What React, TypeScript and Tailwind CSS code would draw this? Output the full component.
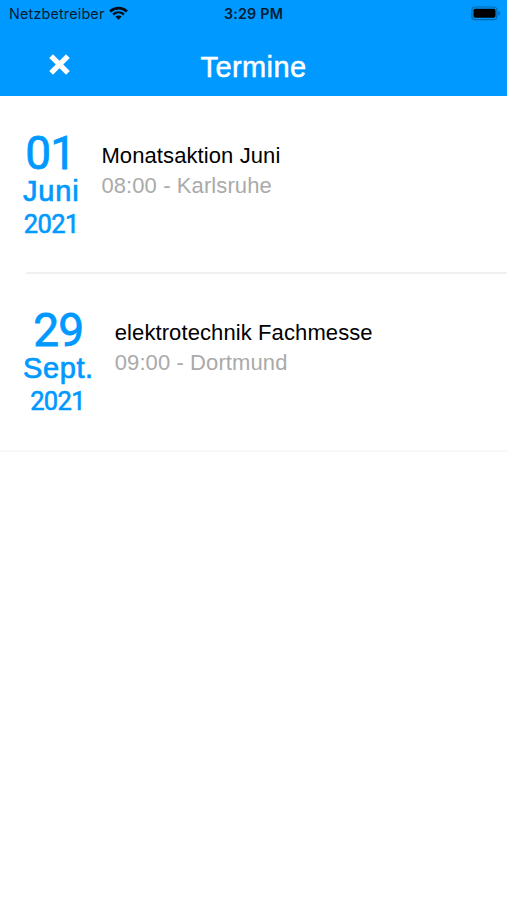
import React from "react";

const appointments = [
  {
    day: "01",
    month: "Juni",
    year: "2021",
    title: "Monatsaktion Juni",
    info: "08:00 - Karlsruhe",
  },
  {
    day: "29",
    month: "Sept.",
    year: "2021",
    title: "elektrotechnik Fachmesse",
    info: "09:00 - Dortmund",
  },
];

function StatusBar() {
  return (
    <div className="grid h-7 grid-cols-3 items-center pl-[9px] pr-1.5 font-['Inter',sans-serif] text-[#001c33]">
      <div className="flex items-center gap-[5px]">
        <span className="text-[14.3px] leading-none tracking-[0.2px]">Netzbetreiber</span>
        <svg className="mb-[2px] h-[14px] w-[19px] shrink-0" viewBox="0 0 19 14" fill="none" stroke="#000d1a">
          <path d="M1.1 5.4C5.9 0.9 13.1 0.9 17.9 5.4" strokeWidth="2.7" />
          <path d="M4.1 8.5C7.3 5.6 11.7 5.6 14.9 8.5" strokeWidth="2.4" />
          <path d="M6.3 10.6C8.1 9 10.9 9 12.7 10.6L9.5 13.8Z" fill="#000d1a" stroke="none" />
        </svg>
      </div>
      <span className="mr-[3px] text-center text-[14.3px] leading-none font-semibold tracking-[0.2px]">3:29 PM</span>
      <svg className="mb-0.5 h-[15px] w-[30px] justify-self-end" viewBox="0 0 30 15">
        <rect x="0.9" y="1" width="25" height="12.6" rx="3.4" fill="none" stroke="#0468ab" strokeWidth="1.2" />
        <rect x="2.5" y="2.8" width="22" height="9" rx="1.8" fill="#000" />
        <path d="M27.3 5.2C29.8 6 29.8 8.6 27.3 9.4Z" fill="#0468ab" />
      </svg>
    </div>
  );
}

export default function App() {
  return (
    <div className="min-h-screen w-full overflow-hidden bg-white font-['Liberation_Sans',sans-serif]">
      <header className="h-24 bg-[#0099ff]">
        <StatusBar />
        <div className="grid h-[68px] grid-cols-[120px_1fr_120px] items-center text-white">
          <button className="mb-[-5px] ml-[49px] h-[21px] w-[21px]" aria-label="Schließen">
            <svg viewBox="0 0 20 20" stroke="#fff" strokeWidth="5">
              <path d="M2 2L18 18M18 2L2 18" />
            </svg>
          </button>
          <h1 className="mt-[10px] text-center text-[29px] leading-none tracking-[0.4px] [-webkit-text-stroke:0.5px_#fff]">
            Termine
          </h1>
        </div>
      </header>
      <ul>
        {appointments.map((item) => (
          <li key={item.title} className="group">
            <div className="flex h-44 pl-[23px] group-last:-mt-px group-last:h-[177px]">
              <div className="flex flex-col items-center pt-[34px] text-[#0099ff]">
                <span className="mr-0.5 font-['Roboto',sans-serif] text-[46px] leading-[46px] tracking-[-0.8px] [-webkit-text-stroke:0.8px_#0099ff] group-last:mr-0">
                  {item.day}
                </span>
                <span className="text-[29px] leading-[31px] tracking-[0.8px] [-webkit-text-stroke:0.7px_#0099ff] group-last:tracking-[0.6px]">
                  {item.month}
                </span>
                <span className="font-['Roboto',sans-serif] text-[25.5px] leading-[34px] tracking-[-0.6px] [-webkit-text-stroke:0.6px_#0099ff] group-last:mr-[1.5px]">
                  {item.year}
                </span>
              </div>
              <div className="pl-[22px] pt-[45px] text-[22px] leading-[30px] tracking-[0.1px] group-last:pl-[21px]">
                <h2 className="text-black">{item.title}</h2>
                <p className="text-[#aaaaaa]">{item.info}</p>
              </div>
            </div>
            <div className="ml-[26px] h-0.5 bg-[#f0f0f0] group-last:ml-0 group-last:bg-[#f8f8f8]" />
          </li>
        ))}
      </ul>
    </div>
  );
}
